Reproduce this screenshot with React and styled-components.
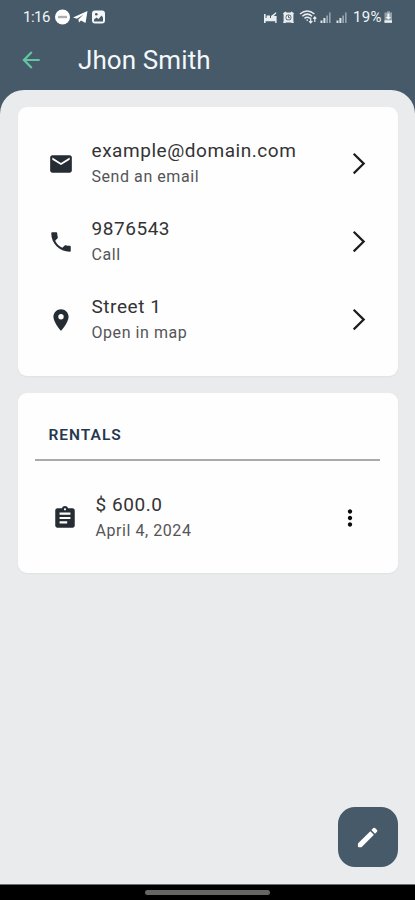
import React from 'react';
import styled, { createGlobalStyle } from 'styled-components';
import {
    MdArrowBack,
    MdEmail,
    MdPhone,
    MdLocationOn,
    MdAssignment,
    MdMoreVert,
} from 'react-icons/md';

const GlobalStyle = createGlobalStyle`
    * {
        box-sizing: border-box;
    }

    body {
        margin: 0;
        background: #465a69;
        font-family: Roboto, sans-serif;
    }
`;

const Screen = styled.div`
    display: flex;
    flex-direction: column;
    width: 415px;
    height: 900px;
    overflow: hidden;
    background: #465a69;
`;

const StatusBar = styled.div`
    display: flex;
    align-items: center;
    justify-content: space-between;
    height: 32px;
    padding: 1px 22px 0 23px;
    color: #f1f5f8;
    font-size: 15px;
`;

const StatusGroup = styled.div`
    display: flex;
    align-items: center;

    svg {
        display: block;
    }
`;

const StatusText = styled.span`
    letter-spacing: ${(props) => props.$spacing || '0'};
    margin: ${(props) => props.$margin || '0'};
`;

const Header = styled.header`
    display: flex;
    align-items: center;
    height: 58px;
    padding: 0 18px 2px;
`;

const BackButton = styled.button`
    display: flex;
    padding: 0;
    margin-right: 34px;
    border: 0;
    background: none;
    color: #64c5a2;
    font-size: 26px;
`;

const Title = styled.h1`
    margin: 0;
    color: #f4f8fb;
    font-size: 26px;
    font-weight: 400;
    line-height: 32px;
    letter-spacing: 0.1px;
    white-space: nowrap;
`;

const Sheet = styled.main`
    position: relative;
    flex: 1;
    display: flex;
    flex-direction: column;
    gap: 17px;
    padding: 17px 17px 0 18px;
    border-radius: 24px 24px 0 0;
    background: #e9ebec;
`;

const Card = styled.section`
    height: ${(props) => props.$height};
    padding: ${(props) => props.$padding};
    border-radius: 9px;
    background: #fefefe;
    box-shadow: 0 1px 2px rgba(40, 50, 60, 0.05);
`;

const Row = styled.div`
    display: flex;
    align-items: center;
    height: 78px;
    padding: ${(props) => props.$padding};
`;

const RowIcon = styled.span`
    display: flex;
    width: 26px;
    margin-right: 17.5px;
    padding-bottom: ${(props) => props.$lift || '0'};
    color: #262c33;
    font-size: 26px;
`;

const RowText = styled.div`
    flex: 1;
    white-space: nowrap;
`;

const Primary = styled.div`
    color: #333335;
    font-size: 19px;
    line-height: 26px;
    letter-spacing: 0.55px;
`;

const Secondary = styled.div`
    color: #555557;
    font-size: 16px;
    line-height: 26px;
    letter-spacing: 0.56px;
`;

const CardTitle = styled.h2`
    height: 50px;
    margin: 0;
    padding: 0 13.5px;
    border-bottom: 2px solid #a9aaab;
    color: #26384f;
    font-size: 15.5px;
    font-weight: 600;
    line-height: 49px;
    letter-spacing: 1px;
`;

const MenuButton = styled.button`
    display: flex;
    padding: 0;
    border: 0;
    background: none;
    color: #0c0c0c;
    font-size: 26px;
`;

const Fab = styled.button`
    position: absolute;
    right: 17px;
    bottom: 17px;
    display: flex;
    align-items: center;
    justify-content: center;
    width: 60px;
    height: 60px;
    padding: 0;
    border: 0;
    border-radius: 17px;
    background: #465a69;
`;

const NavBar = styled.div`
    display: flex;
    justify-content: center;
    height: 16px;
    padding-top: 5px;
    border-top: 1px solid #6d6e6e;
    background: #000;
`;

const NavHandle = styled.div`
    width: 125px;
    height: 5px;
    border-radius: 3px;
    background: #666;
`;

const Chevron = () => (
    <svg width='14' height='24' viewBox='0 0 14 24' fill='none' stroke='#1d1d1f' strokeWidth='2.2'>
        <path d='M1.7 1.8 11.7 11.6 1.7 21.4' />
    </svg>
);

// do not disturb, telegram and gallery notifications
const NotificationIcons = () => (
    <svg width='52' height='16' viewBox='0 0 52 16'>
        <circle cx='7.5' cy='8' r='7.5' fill='#fff' />
        <rect x='3' y='6.8' width='9' height='2.4' fill='#a9afb4' />
        <path d='M18 8.6 32.5 2 30.5 14 26 11.4 24 13.6 23.4 10.5 28.5 5.6 22 9.8Z' fill='#fff' />
        <rect x='37' y='1.6' width='13' height='13' rx='3' fill='#f4f6f8' />
        <path d='M39 12.5V10.5L41.5 8.5 43.5 10 46.5 6.5 48 8.5V12.5Z' fill='#465a69' />
        <circle cx='41.3' cy='5.3' r='1.3' fill='#465a69' />
    </svg>
);

// bed, alarm, wifi and two sim signals
const SystemIcons = () => (
    <svg width='84' height='16' viewBox='0 0 84 16'>
        <g fill='#e8edf0'>
            <path d='M0 5H1.6V9H12.6V14H11.2V12.2H1.6V14H0ZM2.5 6.5H6V9H2.5ZM7 7 12.2 3V4.6L9.8 7H12.6V9H7Z' />
            <path d='M19 4.3 21.5 2.6 22.5 3.4H26.5L27.5 2.6 30 4.3 29.4 5.5V12.5L30 14H27.5L27 13.4H22L21.5 14H19L19.6 12.5V5.5Z' />
        </g>
        <circle cx='24.5' cy='8.4' r='2.9' fill='#465a69' />
        <circle cx='24.5' cy='8.4' r='2.2' fill='#eef2f4' />
        <path d='M24.5 6.5V8.7H26.3' fill='none' stroke='#465a69' strokeWidth='0.9' />
        <g fill='none' stroke='#e8edf0' strokeWidth='1.5'>
            <path d='M36 5Q43.2-1 50.4 5' />
            <path d='M38.3 7.2Q43.2 3 48.1 7.2' />
            <path d='M40.5 9.4Q43.2 7.2 45.9 9.4' />
            <path d='M43.2 10.2V12M46.7 8.5V14M45 12.2 46.7 14 48.4 12.2M50.8 13V8M49.3 9.7 50.8 8 52.3 9.7' strokeWidth='1.2' />
        </g>
        <g fill='#dfe4e7'>
            <path d='M56.5 11.5H58.5V14H56.5ZM59.4 9H61.4V14H59.4Z' />
            <path d='M72.5 11.5H74.5V14H72.5ZM75.4 9H77.4V14H75.4Z' />
        </g>
        <g fill='#97a3ac'>
            <path d='M62.3 6.5H64V14H62.3ZM65 3.5H66.6V14H65Z' />
            <path d='M78.3 6.5H80V14H78.3ZM81 3.5H82.6V14H81Z' />
        </g>
    </svg>
);

const BatteryIcon = () => (
    <svg width='9' height='14' viewBox='0 0 9 14'>
        <path d='M3 1.2H6V2.4H8V12.7H0.5V2.4H3Z' fill='#93a0a9' />
        <path d='M3.4 3.5H5.4V7H7.2L4.4 9.5 1.6 7H3.4Z' fill='#f3f6f8' />
        <path d='M0.5 10.4H8V12.7H0.5Z' fill='#eef2f4' />
    </svg>
);

const PencilIcon = () => (
    <svg width='24' height='24' viewBox='0 0 24 24' fill='#fff'>
        <path d='M2.4 18 14.3 6.2 17.9 9.8 6 21.7Q5.5 22.2 4.8 22.2H2.9Q1.9 22.2 1.9 21.2V19.3Q1.9 18.5 2.4 18Z' />
        <path d='M15.4 5.1 17.4 3.1Q18.2 2.3 19 3.1L21 5.1Q21.8 5.9 21 6.7L19 8.7Z' />
    </svg>
);

const contacts = [
    { icon: MdEmail, primary: 'example@domain.com', secondary: 'Send an email' },
    { icon: MdPhone, primary: '9876543', secondary: 'Call' },
    { icon: MdLocationOn, primary: 'Street 1', secondary: 'Open in map' },
];

const App = () => {
    return (
        <>
            <GlobalStyle />
            <Screen>
                <StatusBar>
                    <StatusGroup>
                        <StatusText $margin='0 5px 0 0' $spacing='-0.5px'>1:16</StatusText>
                        <NotificationIcons />
                    </StatusGroup>
                    <StatusGroup>
                        <SystemIcons />
                        <StatusText $margin='0 2px 0 4.5px' $spacing='0.4px'>19%</StatusText>
                        <BatteryIcon />
                    </StatusGroup>
                </StatusBar>
                <Header>
                    <BackButton aria-label='Back'>
                        <MdArrowBack />
                    </BackButton>
                    <Title>Jhon Smith</Title>
                </Header>
                <Sheet>
                    <Card $height='269px' $padding='18px 0 0'>
                        {contacts.map((item) => (
                            <Row key={item.primary} $padding='0 32px 0 30px'>
                                <RowIcon $lift='1px'>
                                    <item.icon />
                                </RowIcon>
                                <RowText>
                                    <Primary>{item.primary}</Primary>
                                    <Secondary>{item.secondary}</Secondary>
                                </RowText>
                                <Chevron />
                            </Row>
                        ))}
                    </Card>
                    <Card $height='180px' $padding='18px 18px 0 17px'>
                        <CardTitle>RENTALS</CardTitle>
                        <Row $padding='36px 17px 0 17px'>
                            <RowIcon>
                                <MdAssignment />
                            </RowIcon>
                            <RowText>
                                <Primary>$ 600.0</Primary>
                                <Secondary>April 4, 2024</Secondary>
                            </RowText>
                            <MenuButton aria-label='More'>
                                <MdMoreVert />
                            </MenuButton>
                        </Row>
                    </Card>
                    <Fab aria-label='Edit'>
                        <PencilIcon />
                    </Fab>
                </Sheet>
                <NavBar>
                    <NavHandle />
                </NavBar>
            </Screen>
        </>
    );
};

export default App;
